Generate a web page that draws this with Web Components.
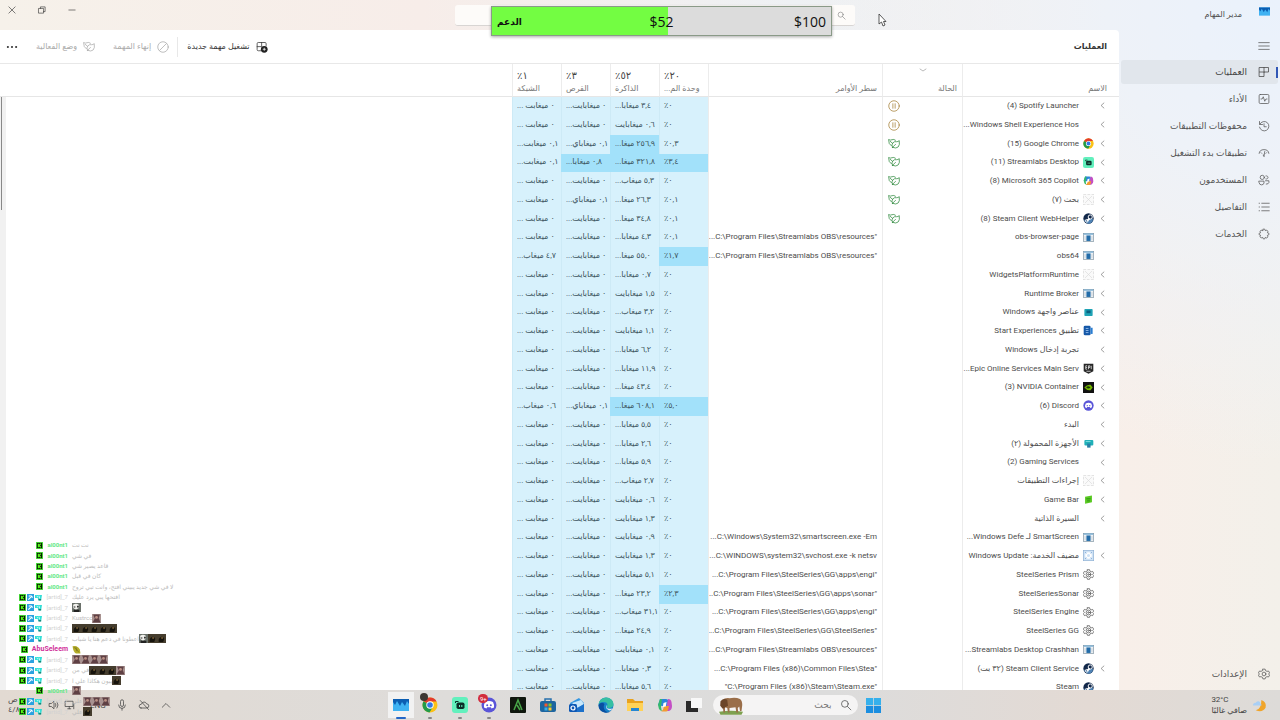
<!DOCTYPE html>
<html lang="ar" dir="rtl">
<head>
<meta charset="utf-8">
<title>مدير المهام</title>
<style>
  body {
    margin: 0;
    height: 100vh;
    overflow: hidden;
    font-family: Roboto, "Noto Sans", "DejaVu Sans", sans-serif;
    font-size: 8px;
    color: #4c4c4c;
  }
</style>
</head>
<body>
<task-desktop>
  <task-manager></task-manager>
  <task-bar slot="bar"></task-bar>
  <stream-goal slot="overlay" label="الدعم" now="52" goal="100"></stream-goal>
  <stream-chat slot="overlay"></stream-chat>
</task-desktop>

<script>
const line = (d, extra = '') => `<path d="${d}" fill="none" stroke="currentColor" stroke-width="1" stroke-linecap="round" stroke-linejoin="round" ${extra}/>`;
const steam = '<circle cx="8" cy="8" r="7.5" fill="#12284a"/><path d="M.7 9.500 6.500 11.500 9 9 14 7.500A6 6 0 0 1 5 14.500z" fill="#4f83b5"/><circle cx="10.500" cy="5.800" r="3" fill="#12284a" stroke="#fff" stroke-width="1.400"/><circle cx="5.500" cy="11.300" r="2" fill="none" stroke="#fff" stroke-width="1.200"/><path d="m1 8.500 4 2 3.500-3.500 2 2-3.500 3z" fill="#fff"/>';
const chrome = '<circle cx="8" cy="8" r="7.500" fill="#fbc116"/><path d="M8 8 1.500 4.200A7.500 7.500 0 0 1 14.600 4.500H8z" fill="#e33b2e"/><path d="M1.500 4.200A7.500 7.500 0 0 0 7.500 15.500L11 9.700 8 8z" fill="#229a4a"/><circle cx="8" cy="8" r="3.700" fill="#fff"/><circle cx="8" cy="8" r="2.800" fill="#3478e5"/>';
const discord = '<circle cx="8" cy="8" r="7.500" fill="#5a55d8"/><path d="M4 5q4-1.800 8 0 1.500 3 1 5.500l-2.500 1-.6-1.200H6.100l-.6 1.200-2.500-1Q2.500 8 4 5z" fill="#fff"/><circle cx="6.200" cy="8.200" r="1" fill="#5a55d8"/><circle cx="9.800" cy="8.200" r="1" fill="#5a55d8"/>';
const streamlabs = '<rect width="16" height="16" rx="3" fill="#62f0bd"/><rect x="4.500" y="5.500" width="8" height="6.500" rx="1.800" fill="#0b2d28"/><path d="M3.500 6V4.500h3" stroke="#0b2d28" fill="none"/><path d="M7.500 8v2M9.800 8v2" stroke="#62f0bd"/>';
const copilot = '<path d="M3 2h6q2 0 2.500 2L13 9H5L1 8z" fill="#2c86dc"/><path d="M1 8 3 2h2l-1 8q0 3 2 4-3 0-4-2z" fill="#35b96c"/><path d="M11 2q3 0 3.500 3l.5 4q0 4-3 5H7q2-1 2.500-4z" fill="#c44fc5"/><path d="M4 14q2 0 2.500-3L7 9h5l-1 4q-.5 1.500-2 1.500H5z" fill="#f29b32"/><path d="m6.500 6 3-1-.7 4.500-3 .5z" fill="#fff"/>';

const icons = {
  chevron: line('m10.500 3.500-5 4.500 5 4.500', 'stroke-width="1.300"'),
  down: line('m2 6 6 4 6-4', 'stroke-width="1.800"'),
  up: line('m3 11 5-5 5 5', 'stroke-width="1.400"'),
  close: line('m3 3 10 10M13 3 3 13'),
  restore: line('M3 5.500h7.500V13H3zM5.500 5.500V3H13v7.500h-2.500'),
  minimize: line('M3 8h10'),
  menu: line('M1 3.500h14M1 8h14M1 12.500h14'),
  search: line('M11 6.500a4.500 4.500 0 1 1-9 0 4.500 4.500 0 0 1 9 0zM10 10l4.500 4.500', 'stroke-width="1.400"'),
  processes: line('M2 2h12v6H8v6H2zM8 2v6M2 8h6'),
  performance: line('M3 2h10q1.500 0 1.500 1.500v9Q14.500 14 13 14H3q-1.500 0-1.500-1.500v-9Q1.500 2 3 2zM4 8h1.500l1.500-3 2 6 1.500-3H12'),
  history: line('M2 2v4h4M2.500 5.500A6.300 6.300 0 1 1 2 9.500M8 5v4h3'),
  startup: line('M1.500 8.500q.5-5 6.500-5t6.500 5M4 7.500l1 1M11.500 7.500l-1 1M8 12.500 9 6M8 12.500q-1.500-.5-1-2', 'stroke-width="1.700"'),
  users: line('M8.500 4.500a2.800 2.800 0 1 1-5.600 0 2.800 2.800 0 0 1 5.600 0zM1.500 9.500H8V12q-.5 2.500-3.300 2.500T1.500 12zM10.500 2.500a2.200 2.200 0 1 1 0 4.200M10 9h4.500v2.500q-.5 2-3.500 2'),
  details: line('M5 3h10M5 8h10M5 13h10M1.500 3h.5M1.500 8h.5M1.500 13h.5'),
  services: line('M7 1.500h2l.7 2 2-.7 1.500 1.500-.7 2 2 .7v2l-2 .8.8 2-1.600 1.500-2-.8L9 14.500H7l-.7-2-2 .8-1.600-1.600.8-2-2-.7V7l2-.7-.8-2 1.500-1.500 2 .7z'),
  settings: line('M6.500 1.500h3l.5 2 2 1 2-.5 1.500 2.500L14 8l1.500 1.500L14 12l-2-.5-2 1-.5 2h-3l-.5-2-2-1-2 .5L.5 9.500 2 8 .5 6.500 2 4l2 .5 2-1zM10.500 8a2.500 2.500 0 1 1-5 0 2.500 2.500 0 0 1 5 0z'),
  gear: line('M6.500 1h3l.5 2 2 1 2-.5 1.500 2.500L14 8l1.500 1.500L14 12.500l-2-.5-2 1-.5 2h-3l-.5-2-2-1-2 .5L.5 9.500 2 8 .5 6 2 3.500 4 4l2-1zM11.500 8a3.500 3.500 0 1 1-7 0 3.500 3.500 0 0 1 7 0zM9.200 8a1.200 1.200 0 1 1-2.400 0 1.200 1.200 0 0 1 2.400 0z', 'stroke-width="1.200"'),
  leaf: line('M4.500 10.500Q.5 8.500.8 2q2.200 1.500 4.500.3T10 3M6 12.500Q4 9 6.500 6.500T11 5q2.500 0 4-1.500 1 6-1.500 8.500T6 12.500zM3 4.500l3 2.500M6 12.500l4-4'),
  pause: line('M15 8A7 7 0 1 1 1 8a7 7 0 0 1 14 0zM6.500 5v6M9.500 5v6'),
  end: line('M15 8A7 7 0 1 1 1 8a7 7 0 0 1 14 0zM3.500 12.500l9-9'),
  newtask: line('M7 13H3q-1.500 0-1.500-1.500v-8Q1.500 2 3 2h9q1.500 0 1.500 1.500V6M7.500 2v5M1.500 7.500H7') + '<circle cx="11" cy="11" r="4.500" fill="#222"/><path d="M11 9v4M9 11h4" stroke="#fff"/>',
  more: '<g fill="currentColor"><circle cx="2.500" cy="8" r="1.400"/><circle cx="8" cy="8" r="1.400"/><circle cx="13.500" cy="8" r="1.400"/></g>',
  mic: line('M6 3q0-2 2-2t2 2v5q0 2-2 2T6 8zM3.500 8q0 4.500 4.500 4.500T12.500 8M8 12.500V15'),
  cloud: line('M4 12h7q3.500 0 3.500-2.700T11.500 6.500Q10.500 4 8 4T4.500 7Q1.500 7 1.500 9.500T4 12zM3 2l11 12'),
  sound: line('M2 6h2.500L8 3v10L4.500 10H2zM10 6q1.500 2 0 4M12 4q3 4 0 8'),
  net: line('M2 3h10v7H2zM5 13h4M7 10v3M13 6v7'),
  steam, chrome, discord, streamlabs, copilot,
  blank: '<rect x=".500" y=".500" width="15" height="15" fill="#fafafa" stroke="#d2d2d2" stroke-dasharray="4 2"/><path d="m3 3 10 10M13 3 3 13" stroke="#dadada"/>',
  exe: '<rect x=".500" y="2" width="15" height="12" fill="#eef2f5" stroke="#8295a4"/><path d="M1 3h14" stroke="#7db1d4" stroke-width="2"/><rect x="5" y="5" width="6" height="8" fill="#236ca8"/><path d="M3 6v6M13 6v6" stroke="#b9c5ce"/>',
  widgets: '<rect x="2" y="3" width="12" height="10" rx="1" fill="#1fa3b5"/><rect x="5" y="5" width="6" height="4" fill="#0b6080"/>',
  start: '<rect x="1" y="1" width="10" height="14" rx="2" fill="#1558a8"/><path d="M11 4h3v9h-3z" fill="#2a7ed2"/><path d="M4 5h4M4 8h4M4 11h4" stroke="#bcdcff"/>',
  epic: '<path d="M1 1h14v11l-7 3.500L1 12z" fill="#272727"/><path d="M4 4v5M4 4h2M4 6.500h2M4 9h2M8 4v5M8 4h2v2.500H8M12 4v5M5 12h6" stroke="#fff" fill="none"/>',
  nvidia: '<rect width="16" height="16" fill="#111"/><path d="M2 8q4-5 9-4l3 4-3 4q-5 1-9-4z" fill="#76b900"/><path d="M4.500 8q3-3.500 6.500 0-3.500 3-6.500 0z" fill="#1b3804"/>',
  devices: '<rect x="2" y="3" width="13" height="8" rx="1.500" fill="#20b0b8"/><rect x="6" y="8" width="5" height="6" fill="#287ea5"/><path d="M4 5h7" stroke="#a2eff0"/>',
  gamebar: '<path d="m3 4 10-2v10L3 14z" fill="#59c922"/><path d="M5 7h6M6 10h4" stroke="#1d7a10"/>',
  update: '<rect x=".500" y=".500" width="15" height="15" fill="#cfe2f5" stroke="#8eb0d4"/><circle cx="8" cy="8" r="3.500" fill="none" stroke="#fff" stroke-width="2.500"/><path d="M3 3l2 2M13 3l-2 2M3 13l2-2M13 13l-2-2" stroke="#6e9ccd"/>',
  monitor: '<rect y="2" width="16" height="12" fill="#3fb2f2"/><path d="M0 2h16v5l-2-3-2 5-3-4-2 4-3-5-2 4-2-3z" fill="#0c5eb2"/>',
  armoury: '<rect width="16" height="16" rx="1" fill="#10170e"/><path d="m4 13 4-10 4 10M7 8l3 5" stroke="#48a548" stroke-width="1.500" fill="none"/>',
  store: '<path d="M5 4V2h6v2" stroke="#2870ad" stroke-width="1.500" fill="none"/><rect y="4" width="16" height="11" rx="2" fill="#1d659f"/><path d="M4.500 6.500h3v3h-3z" fill="#f25b2c"/><path d="M8.500 6.500h3v3h-3z" fill="#88c52b"/><path d="M4.500 10.500h3v3h-3z" fill="#35aee9"/><path d="M8.500 10.500h3v3h-3z" fill="#ffc62b"/>',
  outlook: '<path d="M1 6 10 1l5 5v8H3z" fill="#3597e2"/><path d="m3 6 9-3 3 4-6 4z" fill="#c8e7fb"/><path d="m3 14 12-7v8H3z" fill="#1c70ca"/><rect y="7" width="8" height="8" rx="1.500" fill="#0d57b4"/><circle cx="4" cy="11" r="2" fill="none" stroke="#fff" stroke-width="1.200"/>',
  edge: '<circle cx="8" cy="8" r="7.500" fill="#1683ca"/><path d="M.5 8Q1 1 8 .5 15 1 15.500 7q0 4-5 4-3-1-1-3 0-3-4-3-4 0-5 3z" fill="#36bfa2"/><path d="M.5 8q3-4 6-1-2 4 1 7 3 2 6-.5-3 3-7 2-6-1.500-6-7.500z" fill="#0a4fa0"/><path d="M9 8q-2 5 5.500 3.500Q12 15 9 12q-2-2 0-4z" fill="#dcecf5"/>',
  folder: '<path d="M0 2h6l2 2h8v10H0z" fill="#e9a21d"/><path d="M0 6h16v8H0z" fill="#ffd257"/><path d="M4 11h8v3H4z" fill="#2486d3"/>',
  taskview: '<rect x="5" y="1" width="11" height="10" fill="#f8f8f8"/><path d="M0 4h5v7h7v4H0z" fill="#2a2a2a"/>',
  windows: '<g fill="#1b8ee0"><path d="M0 0h7.600v7.600H0zM8.400 0H16v7.600H8.400z" fill="#35b0ec"/><path d="M0 8.400h7.600V16H0zM8.400 8.400H16V16H8.400z"/></g>',
  moon: '<path d="M10 2q6 2 4.500 8.500Q11 16 4 13q6-1 6-11z" fill="#f0a52b"/><path d="M1 8q0-3 3-3 1-2 3-1.500T9 6q2 1 1 2z" fill="#a8cff5"/>',
  bison: '<path d="M0 12.500q8-1.500 16 0l-1 2H1z" fill="#7ea04f"/><path d="M2 5q2-2 5-1.500 4-1 7 .5 1.500 1 1.500 4L15 12h-1l-.5-3-1 1 .3 3h-1.200L11 9.500 7 10v3H6l-.5-3L4 9.500V13H3L2.500 9z" fill="#9a6e49"/><path d="M1 5.500Q3 3 5.500 4.500l.5 4-3.500 2L.8 8.500z" fill="#6b4529"/>',
  k: '<rect width="16" height="16" fill="#0b1c07"/><rect x="1" y="1" width="14" height="14" fill="none" stroke="#4be53b" stroke-width="2"/><path d="M5.500 4v8M11 4 6.500 8l4.500 4" stroke="#53fc18" stroke-width="2.500" fill="none"/>',
  mod: '<rect width="16" height="16" fill="#2ba2e0"/><path d="m3 13 7-7M8 3l5 5M4 5l3-1" stroke="#fff" stroke-width="2.500"/>',
  vip: '<path d="M0 2h16l-2 12H8L6 9H0z" fill="#32dfd7"/><path d="m4 5 3 2M9 4l2 7" stroke="#d8fffc" stroke-width="2"/><path d="M8 11h6v4H8z" fill="#178a7b"/>',
  emote: '<rect width="16" height="16" fill="#453d2e"/><path d="M3 14q-1-7 5-9 4 0 5 4l-2 5z" fill="#16130d"/><circle cx="9" cy="7" r="1.500" fill="#8a6d3c"/>',
  face: '<rect width="16" height="16" fill="#a89290"/><path d="M2 1h12l-2 6 3 8H1l4-7z" fill="#5f4044"/><circle cx="8" cy="6" r="2.500" fill="#bb9085"/>',
  panda: '<rect width="16" height="16" fill="#6a716a"/><path d="M2 3q5-3 10 0v6l-5 3-5-3z" fill="#f2f2ee"/><path d="M3 6h3v2H3zM9 5h3v3H9zM3 12h10v4H3z" fill="#222"/>',
  leafy: '<path d="M1 2q9-2 13 6l1 7H7Q2 12 1 2z" fill="#b5ae2a"/><path d="M3 4q6 2 9 9M7 3l1 8" stroke="#6c6518" fill="none"/>',
};

class UiIcon extends HTMLElement {
  constructor() {
    super();
    this.attachShadow({ mode: 'open' });
  }

  connectedCallback() {
    this.shadowRoot.innerHTML = `
      <style>
        :host { display: inline-block; width: var(--icon, 12px); height: var(--icon, 12px); flex: none; }
        svg { display: block; width: 100%; height: 100%; }
      </style>
      <svg viewBox="0 0 16 16" aria-hidden="true">${icons[this.getAttribute('name')] || ''}</svg>`;
  }
}

class TaskDesktop extends HTMLElement {
  constructor() {
    super();
    this.attachShadow({ mode: 'open' }).innerHTML = `
      <style>
        :host { display: flex; flex-direction: column; height: 100%; position: relative; }
        main { flex: 1; min-height: 0; display: flex; }
        .pointer { position: absolute; left: 878px; top: 13px; width: 9px; height: 14px; }
      </style>
      <main><slot></slot></main>
      <slot name="bar"></slot>
      <slot name="overlay"></slot>
      <svg class="pointer" viewBox="0 0 9 14"><path d="M1 1v10l2.500-2L5 13l2-1-1.500-3.500H8z" fill="#fff" stroke="#333" stroke-width=".8"/></svg>`;
  }
}

class TitleBar extends HTMLElement {
  constructor() {
    super();
    this.attachShadow({ mode: 'open' }).innerHTML = `
      <style>
        :host { display: grid; grid-template-columns: 14fr 400px 15fr; height: 30px; }
        .title { display: flex; gap: 17px; padding-inline-start: 10px; padding-top: 6px; line-height: 18px; }
        .title ui-icon { --icon: 11px; }
        label { display: flex; align-items: center; gap: 6px; margin: 5px 0 4px; padding: 0 9px; border-radius: 3px;
          background: #fdfbf9; border-bottom: 1px solid #d8d5d3; color: #777; --icon: 9px; }
        input { flex: 1; min-width: 0; border: 0; background: none; font: inherit; outline: none; }
        .controls { display: flex; gap: 18px; padding: 4px 6px; direction: ltr; }
        button { border: 0; background: none; padding: 0; width: 12px; height: 12px; display: grid; place-items: center; color: #333; --icon: 10px; }
      </style>
      <div class="title"><ui-icon name="monitor"></ui-icon><span>مدير المهام</span></div>
      <label><ui-icon name="search"></ui-icon><input type="search" aria-label="بحث"></label>
      <div class="controls">
        <button aria-label="إغلاق"><ui-icon name="close"></ui-icon></button>
        <button aria-label="استعادة"><ui-icon name="restore"></ui-icon></button>
        <button aria-label="تصغير"><ui-icon name="minimize"></ui-icon></button>
      </div>`;
  }
}

class NavItem extends HTMLElement {
  constructor() {
    super();
    this.attachShadow({ mode: 'open' });
  }

  connectedCallback() {
    this.shadowRoot.innerHTML = `
      <style>
        :host { display: block; }
        a { display: flex; align-items: center; gap: 11px; height: 24px; padding-inline-start: 8px; border-radius: 3px;
          color: #555; text-decoration: none; font-size: 9px; }
        :host([active]) a { background: linear-gradient(#3157b5, #3157b5) right center / 2px 11px no-repeat #e1e6ec; color: #444; }
      </style>
      <a href="#"><ui-icon name="${this.getAttribute('icon')}"></ui-icon><slot></slot></a>`;
  }
}

class SideNav extends HTMLElement {
  constructor() {
    super();
    this.attachShadow({ mode: 'open' }).innerHTML = `
      <style>
        :host { display: flex; width: 161px; }
        nav { flex: 1; display: flex; flex-direction: column; gap: 3px; padding: 3px 2px 4px; }
        button { width: 28px; height: 24px; border: 0; background: none; padding: 4px 0 0; color: #555; }
        nav-item:last-child { margin-top: auto; }
      </style>
      <nav>
        <button aria-label="القائمة"><ui-icon name="menu"></ui-icon></button>
        <nav-item icon="processes" active>العمليات</nav-item>
        <nav-item icon="performance">الأداء</nav-item>
        <nav-item icon="history">محفوظات التطبيقات</nav-item>
        <nav-item icon="startup">تطبيقات بدء التشغيل</nav-item>
        <nav-item icon="users">المستخدمون</nav-item>
        <nav-item icon="details">التفاصيل</nav-item>
        <nav-item icon="services">الخدمات</nav-item>
        <nav-item icon="settings">الإعدادات</nav-item>
      </nav>`;
  }
}

class TaskToolbar extends HTMLElement {
  constructor() {
    super();
    this.attachShadow({ mode: 'open' }).innerHTML = `
      <style>
        :host { display: flex; align-items: center; height: 33px; padding: 0 12px 0 6px; border-bottom: 1px solid #e8e8e8; }
        h1 { margin: 0; margin-inline-end: auto; font-size: 8px; font-weight: 700; color: #333; }
        button { display: flex; align-items: center; gap: 6px; border: 0; background: none; padding: 0; margin-inline-start: 18px;
          font: inherit; color: #333; }
        button:disabled { color: #aaa; }
        hr { width: 1px; height: 20px; border: 0; margin: 0; margin-inline-start: 9px; background: #e8e8e8; }
        hr + button { margin-inline-start: 8px; }
      </style>
      <h1>العمليات</h1>
      <button><ui-icon name="newtask"></ui-icon>تشغيل مهمة جديدة</button>
      <hr>
      <button disabled><ui-icon name="end"></ui-icon>إنهاء المهمة</button>
      <button disabled><ui-icon name="leaf"></ui-icon>وضع الفعالية</button>
      <button aria-label="المزيد"><ui-icon name="more"></ui-icon></button>`;
  }
}

// [icon, name, expandable, status, command, cpu, memory, disk, network]
// a leading ! marks a cell with heavy use
const D0 = '٠ ميغابايت...';
const D1 = '٠,١ ميغاباي...';
const N0 = '٠ ميغابت ...';
const bdi = (name, count) => `<bdi>${name}</bdi> (${count})`;
const processes = [
  ['', bdi('Spotify Launcher', 4), 1, 'pause', '', '٠', '٣,٤ ميغابا...'],
  ['', 'Windows Shell Experience Hos...', 1, 'pause', '', '٠', '٠,٦ ميغابايت'],
  ['chrome', bdi('Google Chrome', 15), 1, 'leaf', '', '٠,٣', '!٢٥٦,٩ ميغا...', D1, '٠,١ ميغابت...'],
  ['streamlabs', bdi('Streamlabs Desktop', 11), 1, 'leaf', '', '!٣,٤', '!٣٢١,٨ ميغا...', '!٠,٨ ميغابا...', '٠,١ ميغابت...'],
  ['copilot', bdi('Microsoft 365 Copilot', 8), 1, 'leaf', '', '٠', '٥,٣ ميغاب...'],
  ['blank', 'بحث (٧)', 1, 'leaf', '', '٠,١', '٢٦,٣ ميغا...', D1],
  ['steam', bdi('Steam Client WebHelper', 8), 1, 'leaf', '', '٠,١', '٣٤,٨ ميغا...'],
  ['exe', 'obs-browser-page', 0, '', '"C:\\Program Files\\Streamlabs OBS\\resources...', '٠,١', '٤,٣ ميغابا...'],
  ['exe', 'obs64', 0, '', '"C:\\Program Files\\Streamlabs OBS\\resources...', '!١,٧', '٥٥,٠ ميغا...', D0, '٤,٧ ميغاب...'],
  ['blank', 'WidgetsPlatformRuntime', 1, '', '', '٠', '٠,٧ ميغابا...'],
  ['exe', 'Runtime Broker', 1, '', '', '٠', '١,٥ ميغابايت'],
  ['widgets', 'عناصر واجهة Windows', 1, '', '', '٠', '٣,٢ ميغاب...'],
  ['start', 'تطبيق Start Experiences', 1, '', '', '٠', '١,١ ميغابايت'],
  ['', 'تجربة إدخال Windows', 1, '', '', '٠', '٦,٢ ميغابا...'],
  ['epic', 'Epic Online Services Main Serv...', 1, '', '', '٠', '١١,٩ ميغابا...'],
  ['nvidia', bdi('NVIDIA Container', 3), 1, '', '', '٠', '٤٣,٤ ميغا...'],
  ['discord', bdi('Discord', 6), 1, '', '', '!٥,٠', '!٦٠٨,١ ميغا...', D1, '٠,٦ ميغاب...'],
  ['', 'البدء', 1, '', '', '٠', '٥,٥ ميغابا...'],
  ['devices', 'الأجهزة المحمولة (٢)', 1, '', '', '٠', '٢,٦ ميغابا...'],
  ['', bdi('Gaming Services', 2), 1, '', '', '٠', '٥,٩ ميغابا...'],
  ['blank', 'إجراءات التطبيقات', 1, '', '', '٠', '٢,٧ ميغاب...'],
  ['gamebar', 'Game Bar', 1, '', '', '٠', '٠,٦ ميغابايت'],
  ['', 'السيرة الذاتية', 1, '', '', '٠', '١,٣ ميغابايت'],
  ['exe', 'SmartScreen لـ Windows Defe...', 0, '', 'C:\\Windows\\System32\\smartscreen.exe -Em...', '٠', '٠,٩ ميغابايت'],
  ['update', 'مضيف الخدمة: Windows Update', 1, '', 'C:\\WINDOWS\\system32\\svchost.exe -k netsv...', '٠', '١,٣ ميغابايت'],
  ['gear', 'SteelSeries Prism', 0, '', '"C:\\Program Files\\SteelSeries\\GG\\apps\\engi...', '٠', '٥,١ ميغابايت'],
  ['gear', 'SteelSeriesSonar', 0, '', '"C:\\Program Files\\SteelSeries\\GG\\apps\\sonar...', '!٢,٣', '٢٣,٢ ميغا...'],
  ['gear', 'SteelSeries Engine', 0, '', '"C:\\Program Files\\SteelSeries\\GG\\apps\\engi...', '٠', '٣١,١ ميغاب...'],
  ['gear', 'SteelSeries GG', 0, '', '"C:\\Program Files\\SteelSeries\\GG\\SteelSeries...', '٠', '٢٤,٩ ميغا...'],
  ['exe', 'Streamlabs Desktop Crashhan...', 0, '', '"C:\\Program Files\\Streamlabs OBS\\resources...', '٠', '٠,١ ميغابايت'],
  ['steam', bdi('Steam Client Service', '٣٢ بت'), 1, '', '"C:\\Program Files (x86)\\Common Files\\Stea...', '٠', '٠,٣ ميغابا...'],
  ['steam', 'Steam', 0, '', '"C:\\Program Files (x86)\\Steam\\Steam.exe"', '٠', '٥,٦ ميغابا...'],
];

class ProcessTable extends HTMLElement {
  constructor() {
    super();
    this.attachShadow({ mode: 'open' });
  }

  connectedCallback() {
    this.render();
  }

  usage(text) {
    const hot = text.startsWith('!');
    return `<td class="use${hot ? ' hot' : ''}">${hot ? text.slice(1) : text}</td>`;
  }

  row([icon, name, expand, status, command, cpu, memory, disk = D0, network = N0]) {
    return `<tr>
      <td><div class="name"><span class="arrow">${expand ? '<ui-icon name="chevron"></ui-icon>' : ''}</span><ui-icon name="${icon}"></ui-icon><span>${name}</span></div></td>
      <td class="status ${status}">${status ? `<ui-icon name="${status}"></ui-icon>` : ''}</td>
      <td class="cmd">${command}</td>
      ${this.usage(cpu + '٪')}${this.usage(memory)}${this.usage(disk)}${this.usage(network)}
      <td></td></tr>`;
  }

  render() {
    this.shadowRoot.innerHTML = `
      <style>
        :host { display: block; flex: 1; min-height: 0; overflow: hidden; position: relative; }
        table { width: 100%; table-layout: fixed; border-collapse: separate; border-spacing: 0; }
        th, td { padding: 0; box-sizing: border-box; white-space: nowrap; overflow: hidden; border-left: 1px solid #ececec; text-align: start; font-weight: 400; }
        th { height: 33px; vertical-align: bottom; border-bottom: 1px solid #e6e6e6; color: #777; line-height: 13px; padding: 0 12px 1px 4px; position: relative; }
        th:nth-child(2), th:nth-child(3) { padding-right: 5px; }
        th:last-child, td:last-child { border-left: 0; }
        th.num { text-align: left; padding: 0 4px 1px; }
        th b { display: block; font-size: 10px; font-weight: 400; color: #444; }
        th .sort { position: absolute; top: 2px; left: 36px; --icon: 8px; }
        .c-name { width: 157px; }
        .c-status { width: 80px; }
        .c-cmd { width: 174px; }
        .c-use { width: 49px; }
        tbody tr { height: 19px; }
        tbody tr:nth-child(4n) { height: 18px; }
        td { line-height: 16px; padding-bottom: 2px; }
        .name { display: flex; align-items: center; padding-inline-start: 12px; --icon: 11px; }
        .arrow { flex: none; width: 13px; line-height: 0; --icon: 9px; color: #555; }
        .name > span:last-child { margin-inline-start: 4px; }
        .status { text-align: left; padding-left: 5px; line-height: 0; --icon: 12px; }
        .status.leaf { color: #2f8a3d; }
        .status.pause { color: #a58038; }
        .cmd { padding-inline-start: 5px; }
        .use { text-align: left; padding-left: 4px; background: #d7f1fc; border-left-color: #cdeaf6; color: #3d5560; }
        .use.hot { background: #a2e1fa; border-left-color: #a2e1fa; }
        .scroll { position: absolute; left: 0; top: 33px; bottom: 0; width: 6px; background: #f1f1f1; }
        .scroll::after { content: ""; position: absolute; left: 1px; top: 0; width: 1px; height: 19%; background: #888; }
      </style>
      <table>
        <colgroup><col class="c-name"><col class="c-status"><col class="c-cmd"><col class="c-use"><col class="c-use"><col class="c-use"><col class="c-use"><col></colgroup>
        <thead><tr>
          <th>الاسم</th><th><ui-icon class="sort" name="down"></ui-icon>الحالة</th><th>سطر الأوامر</th>
          <th class="num"><b>٢٠٪</b>وحدة الم...</th><th class="num"><b>٥٢٪</b>الذاكرة</th>
          <th class="num"><b>٣٪</b>القرص</th><th class="num"><b>١٪</b>الشبكة</th><th></th>
        </tr></thead>
        <tbody>${processes.map((p) => this.row(p)).join('')}</tbody>
      </table>
      <div class="scroll"></div>`;
  }
}

class TaskManager extends HTMLElement {
  constructor() {
    super();
    this.attachShadow({ mode: 'open' }).innerHTML = `
      <style>
        :host { flex: 1; display: flex; flex-direction: column; min-width: 0;
          background: radial-gradient(circle at 100% 0, #eaf2fc 0, #eef2f8 12%, transparent 32%),
            linear-gradient(90deg, #f6f1ea 0, #f7ede9 33%, #eef1f4 62%, #f8efe9 88%, #f3f0ea 100%); }
        .body { flex: 1; min-height: 0; display: flex; }
        section { flex: 1; min-width: 0; display: flex; flex-direction: column; background: #fff; border-top-right-radius: 4px; }
      </style>
      <title-bar></title-bar>
      <div class="body">
        <side-nav></side-nav>
        <section><task-toolbar></task-toolbar><process-table></process-table></section>
      </div>`;
  }
}

class TaskBar extends HTMLElement {
  constructor() {
    super();
    const apps = ['taskview', 'copilot', 'folder', 'edge', 'outlook', 'store', 'armoury', 'discord', 'streamlabs', 'chrome', 'monitor'];
    this.attachShadow({ mode: 'open' }).innerHTML = `
      <style>
        :host { display: grid; grid-template-columns: 1fr auto 1fr; height: 30px; align-items: center; padding-inline-start: 4px;
          background: linear-gradient(90deg, #e2dad2, #dedcda 35%, #dcdcdc 65%, #e3dad4 85%, #dddbd8); }
        button { border: 0; background: none; padding: 0; font: inherit; color: #444; display: grid; place-items: center; position: relative; }
        .weather { display: flex; align-items: center; gap: 5px; padding-inline-start: 9px; line-height: 11px; text-align: start; --icon: 15px; justify-self: start; }
        .weather bdi { display: block; }
        .middle { display: flex; align-items: center; }
        .start { width: 32px; --icon: 15px; }
        label { display: flex; align-items: center; gap: 8px; box-sizing: border-box; width: 145px; height: 20px; padding: 0 6px; border-radius: 10px; background: #f5f4f4; --icon: 12px; }
        label input { flex: 1; min-width: 0; border: 0; background: none; font: inherit; font-size: 9px; outline: none; padding: 0; }
        input::placeholder { color: #777; }
        .bison { --icon: 24px; }
        .apps { display: flex; width: 322px; margin-inline-start: 4px; --icon: 16px; }
        .apps button { flex: 1; height: 28px; }
        .apps button:last-child { background: linear-gradient(#f2f2f2, #f2f2f2) center / 26px 26px no-repeat; }
        .apps button:nth-child(n+8)::after { content: ""; position: absolute; bottom: 0; width: 4px; height: 2px; border-radius: 1px; background: #888; }
        .apps button:last-child::after { width: 10px; background: #2467c7; }
        .badge { position: absolute; top: 3px; left: 4px; min-width: 10px; height: 9px; border-radius: 5px; background: #d22d3d; color: #fff; font-size: 6px; line-height: 9px; direction: ltr; }
        .avatar { position: absolute; top: 2px; left: 4px; width: 8px; height: 8px; border-radius: 50%; background: #3c3631; }
        .tray { display: flex; align-items: center; justify-content: flex-end; gap: 10px; padding-left: 8px; --icon: 12px; }
        .clock { line-height: 10px; text-align: left; width: 30px; }
        .lang { margin-left: 4px; }
        .pair { display: flex; gap: 4px; }
      </style>
      <button class="weather"><ui-icon name="moon"></ui-icon><span><bdi>32°C</bdi>صافي غالبًا</span></button>
      <div class="middle">
        <button class="start" aria-label="ابدأ"><ui-icon name="windows"></ui-icon></button>
        <label><ui-icon name="search"></ui-icon><input type="search" placeholder="بحث" aria-label="بحث"><ui-icon class="bison" name="bison"></ui-icon></label>
        <div class="apps">${apps.map((name) => `<button aria-label="${name}"><ui-icon name="${name}"></ui-icon>${name === 'discord' ? '<span class="badge">9+</span>' : ''}${name === 'chrome' ? '<span class="avatar"></span>' : ''}</button>`).join('')}</div>
      </div>
      <div class="tray">
        <button aria-label="إظهار المخفي"><ui-icon name="up"></ui-icon></button>
        <button aria-label="السحابة"><ui-icon name="cloud"></ui-icon></button>
        <button aria-label="الميكروفون"><ui-icon name="mic"></ui-icon></button>
        <button class="lang">ENG</button>
        <div class="pair">
          <button aria-label="الشبكة"><ui-icon name="net"></ui-icon></button>
          <button aria-label="الصوت"><ui-icon name="sound"></ui-icon></button>
        </div>
        <div class="clock">ص<br>٤/٨</div>
      </div>`;
  }
}

class StreamGoal extends HTMLElement {
  constructor() {
    super();
    this.attachShadow({ mode: 'open' });
  }

  connectedCallback() {
    const now = this.getAttribute('now');
    const goal = this.getAttribute('goal');
    this.shadowRoot.innerHTML = `
      <style>
        :host { position: absolute; left: 491px; top: 6px; width: 341px; height: 30px; box-sizing: border-box; direction: ltr;
          display: grid; grid-template-columns: 1fr auto 1fr; align-items: center; padding: 0 5px; border: 1px solid #8a9a88;
          box-shadow: 0 1px 3px #0005; background: linear-gradient(90deg, #73fd42 ${now / goal * 100}%, #dcdcdc 0);
          font-family: "Open Sans", "Noto Sans", "DejaVu Sans", sans-serif; font-size: 14px; color: #111; }
        .label { font-size: 9px; font-weight: 700; }
        .goal { text-align: right; }
      </style>
      <span class="label">${this.getAttribute('label')}</span>
      <span>$${now}</span>
      <span class="goal">$${goal}</span>`;
  }
}

const guest = { name: 'al00nt1', kind: 'green' };
const regular = { name: '[artid]_7', kind: 'pale' };
const messages = [
  [guest, 'نت نت'],
  [guest, 'في شي'],
  [guest, 'قاعد يصير شي'],
  [guest, 'كان في قبل'],
  [guest, 'لا في شي جديد يبيني افتح، وانت تبي تروح'],
  [regular, 'افتحها يبي يرد عليك'],
  [regular, '', 'panda'],
  [regular, 'Kustrcc', 'face'],
  [regular, '', 'emote emote emote emote emote'],
  [regular, 'اعطونا في دعم هنا يا شباب', 'panda emote emote'],
  [{ name: 'AbuSeleem', kind: 'pink' }, '', 'leafy'],
  [regular, '', 'face face face face'],
  [regular, 'في من', 'emote emote emote face'],
  [regular, 'يبون هكاذا علي ا', 'emote'],
  [guest, '', 'face'],
  [regular, 'علي', 'face face face'],
  [regular, 'علي', 'emote'],
];

class StreamChat extends HTMLElement {
  constructor() {
    super();
    this.attachShadow({ mode: 'open' }).innerHTML = `
      <style>
        :host { position: absolute; left: 0; bottom: 3px; height: 177px; direction: ltr; display: grid; grid-auto-rows: 1fr; font-size: 6px; line-height: 10px; }
        .msg { display: grid; grid-template-columns: 68px auto; gap: 4px; align-items: center; white-space: nowrap; --icon: 7px; }
        .who, .text { display: flex; align-items: center; gap: 1px; }
        .who { justify-content: flex-end; }
        .who b { margin-left: 3px; }
        .green b { color: #63e886; }
        .pale b { color: #d2d2d2; font-weight: 400; }
        .pink b { color: #d0309a; font-size: 7px; }
        .text { gap: 0; color: #bbb; --icon: 9px; }
      </style>
      ${messages.map(([user, text, emotes = '']) => `<div class="msg">
        <div class="who ${user.kind}">
          <ui-icon name="k"></ui-icon>${user.kind === 'pale' ? '<ui-icon name="mod"></ui-icon><ui-icon name="vip"></ui-icon>' : ''}<b>${user.name}</b>
        </div>
        <div class="text"><bdi>${text}</bdi>${emotes.split(' ').filter(Boolean).map((e) => `<ui-icon name="${e}"></ui-icon>`).join('')}</div>
      </div>`).join('')}`;
  }
}

customElements.define('ui-icon', UiIcon);
customElements.define('task-desktop', TaskDesktop);
customElements.define('title-bar', TitleBar);
customElements.define('nav-item', NavItem);
customElements.define('side-nav', SideNav);
customElements.define('task-toolbar', TaskToolbar);
customElements.define('process-table', ProcessTable);
customElements.define('task-manager', TaskManager);
customElements.define('task-bar', TaskBar);
customElements.define('stream-goal', StreamGoal);
customElements.define('stream-chat', StreamChat);
</script>
</body>
</html>
